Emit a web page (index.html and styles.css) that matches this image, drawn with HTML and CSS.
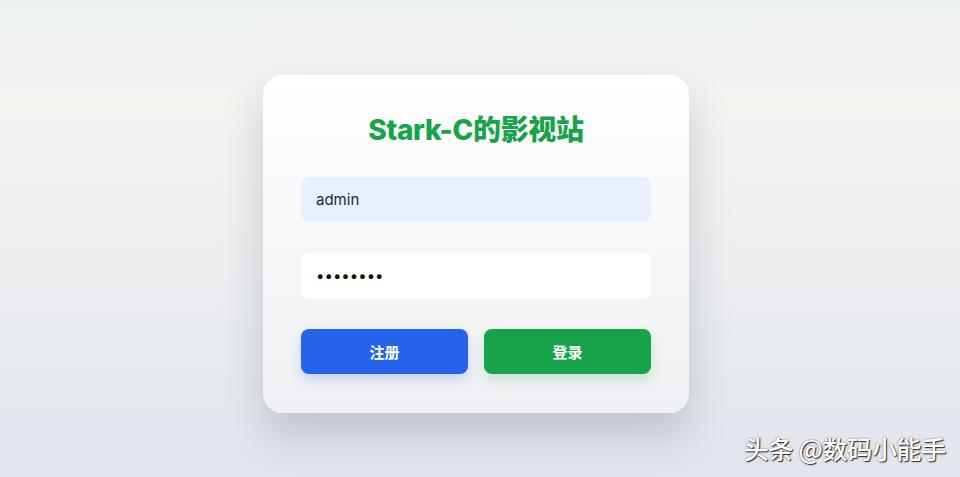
FILE: index.html
```html
<!DOCTYPE html>
<html lang="zh">
<head>
<meta charset="utf-8">
<title>Stark-C的影视站</title>
<link rel="stylesheet" href="styles.css">
</head>
<body>
<main class="page">
  <form class="card">
    <h1 class="title">Stark-C的影视站</h1>
    <input class="field field-user" type="text" value="admin">
    <input class="field field-pass" type="password" value="12345678">
    <div class="actions">
      <button type="button" class="btn btn-register">注册</button>
      <button type="button" class="btn btn-login">登录</button>
    </div>
  </form>
  <div class="watermark">头条 @数码小能手</div>
</main>
</body>
</html>
```
FILE: styles.css
```css
html, body {
  margin: 0;
  padding: 0;
  height: 100%;
}
body {
  font-family: Inter, "Noto Sans CJK SC", sans-serif;
  background: linear-gradient(180deg, #eef1f3 0%, #f3f4f0 22%, #eceef0 55%, #e1e5ec 100%);
  overflow: hidden;
}
.page {
  height: 477px;
  display: flex;
  justify-content: center;
  align-items: flex-start;
  position: relative;
}
.card {
  margin-top: 75px;
  margin-right: 8px;
  width: 426px;
  box-sizing: border-box;
  padding: 39px 38px 39px;
  border-radius: 20px;
  background: linear-gradient(180deg, #ffffff 0%, #f6f7f8 55%, #eef0f3 100%);
  box-shadow: 0 22px 40px rgba(60, 70, 85, 0.22);
  display: flex;
  flex-direction: column;
}
.title {
  margin: 0 0 30px;
  text-align: center;
  font-size: 28px;
  line-height: 33px;
  font-weight: 800;
  color: #16a34a;
  letter-spacing: -0.3px;
}
.field {
  height: 45px;
  border: none;
  border-radius: 8px;
  padding: 0 15px;
  font-family: Inter, "Noto Sans CJK SC", sans-serif;
  font-size: 15px;
  color: #1f2937;
  outline: none;
  box-sizing: border-box;
  width: 100%;
}
.field-user {
  background: #e8f0fe;
  margin-bottom: 31px;
}
.field-pass {
  background: #ffffff;
  margin-bottom: 31px;
  font-size: 15px;
  color: #111111;
  letter-spacing: 0;
}
.actions {
  display: flex;
  gap: 16px;
}
.btn {
  flex: 1;
  height: 45px;
  border: none;
  border-radius: 8px;
  color: #ffffff;
  font-family: Inter, "Noto Sans CJK SC", sans-serif;
  font-size: 15px;
  font-weight: 700;
  cursor: pointer;
}
.btn-register {
  background: #2563eb;
  box-shadow: 0 6px 12px rgba(37, 99, 235, 0.2);
}
.btn-login {
  background: #16a34a;
  box-shadow: 0 6px 12px rgba(22, 163, 74, 0.18);
}
.watermark {
  position: absolute;
  right: 14px;
  bottom: 11px;
  font-family: "Noto Sans CJK SC", sans-serif;
  font-size: 25px;
  font-weight: 500;
  letter-spacing: -0.3px;
  color: #ffffff;
  text-shadow: 1px 1px 1px rgba(0, 0, 0, 0.8), 0 0 2px rgba(0, 0, 0, 0.5);
}
```
